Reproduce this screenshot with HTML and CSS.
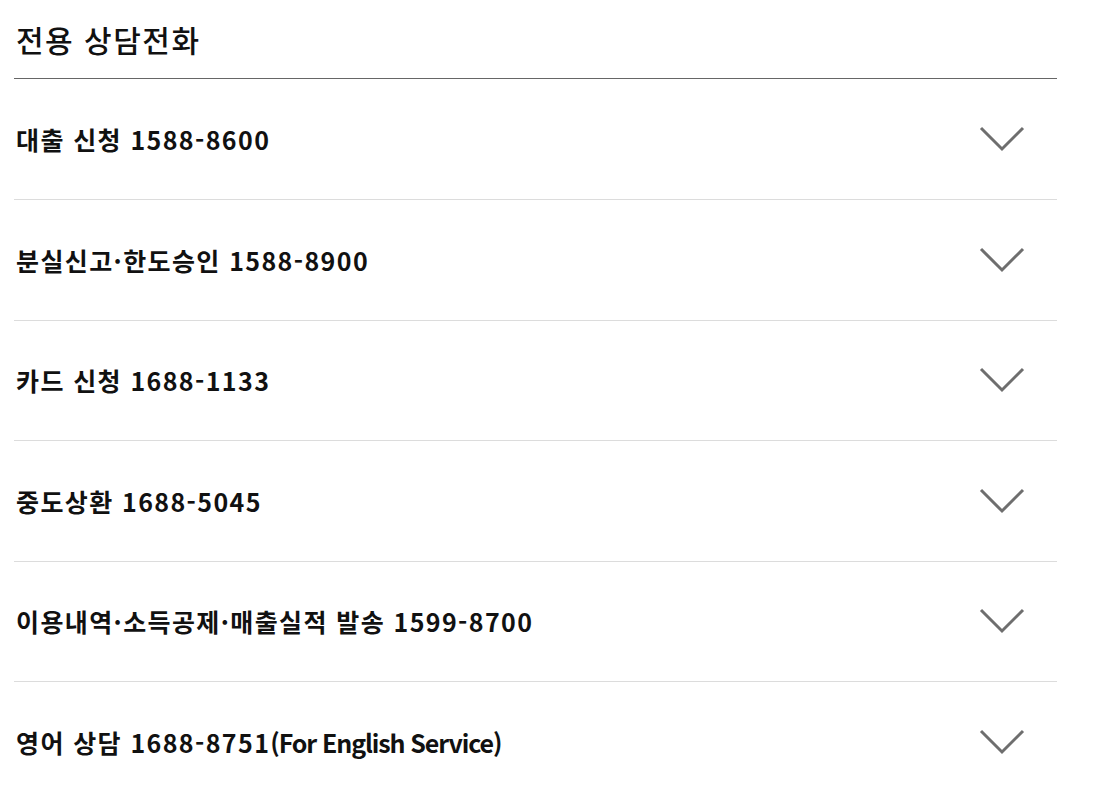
FILE: index.html
```html
<!DOCTYPE html>
<html lang="ko">
<head>
<meta charset="utf-8">
<title>전용 상담전화</title>
<link rel="stylesheet" href="styles.css">
</head>
<body>
<div class="panel">
  <h2 class="title">전용 상담전화</h2>
  <ul class="list">
    <li class="row"><span class="label">대출 신청 1588-8600</span><svg class="chev" viewBox="0 0 46 28"><polyline points="2,3 23,24 44,3"/></svg></li>
    <li class="row"><span class="label">분실신고·한도승인 1588-8900</span><svg class="chev" viewBox="0 0 46 28"><polyline points="2,3 23,24 44,3"/></svg></li>
    <li class="row"><span class="label">카드 신청 1688-1133</span><svg class="chev" viewBox="0 0 46 28"><polyline points="2,3 23,24 44,3"/></svg></li>
    <li class="row"><span class="label">중도상환 1688-5045</span><svg class="chev" viewBox="0 0 46 28"><polyline points="2,3 23,24 44,3"/></svg></li>
    <li class="row"><span class="label">이용내역·소득공제·매출실적 발송 1599-8700</span><svg class="chev" viewBox="0 0 46 28"><polyline points="2,3 23,24 44,3"/></svg></li>
    <li class="row"><span class="label">영어 상담 1688-8751<span class="en">(For English Service)</span></span><svg class="chev" viewBox="0 0 46 28"><polyline points="2,3 23,24 44,3"/></svg></li>
  </ul>
</div>
</body>
</html>
```

FILE: styles.css
```css
html, body {
  margin: 0;
  padding: 0;
  background: #fff;
}
body {
  font-family: "Noto Sans CJK KR", "Noto Sans", sans-serif;
  color: #111;
}
.panel {
  width: 1043px;
  margin-left: 14px;
}
.title {
  margin: 0;
  height: 79px;
  box-sizing: border-box;
  padding: 17px 0 0 2px;
  font-size: 30px;
  line-height: 44px;
  font-weight: 500;
  letter-spacing: 1.5px;
  color: #111;
  border-bottom: 1px solid #666;
}
.list {
  list-style: none;
  margin: 0;
  padding: 0;
}
.row {
  box-sizing: border-box;
  height: 120.5px;
  display: flex;
  align-items: center;
  justify-content: space-between;
  padding: 0 32px 0 2px;
  border-bottom: 1px solid #dcdcdc;
}
.row:first-child {
  height: 121px;
}
.label {
  font-size: 25px;
  font-weight: 700;
  letter-spacing: 1.4px;
  color: #111;
}
.en {
  letter-spacing: -1.1px;
}
.chev {
  width: 46px;
  height: 28px;
  fill: none;
  stroke: #6e6e6e;
  stroke-width: 3;
}
```
